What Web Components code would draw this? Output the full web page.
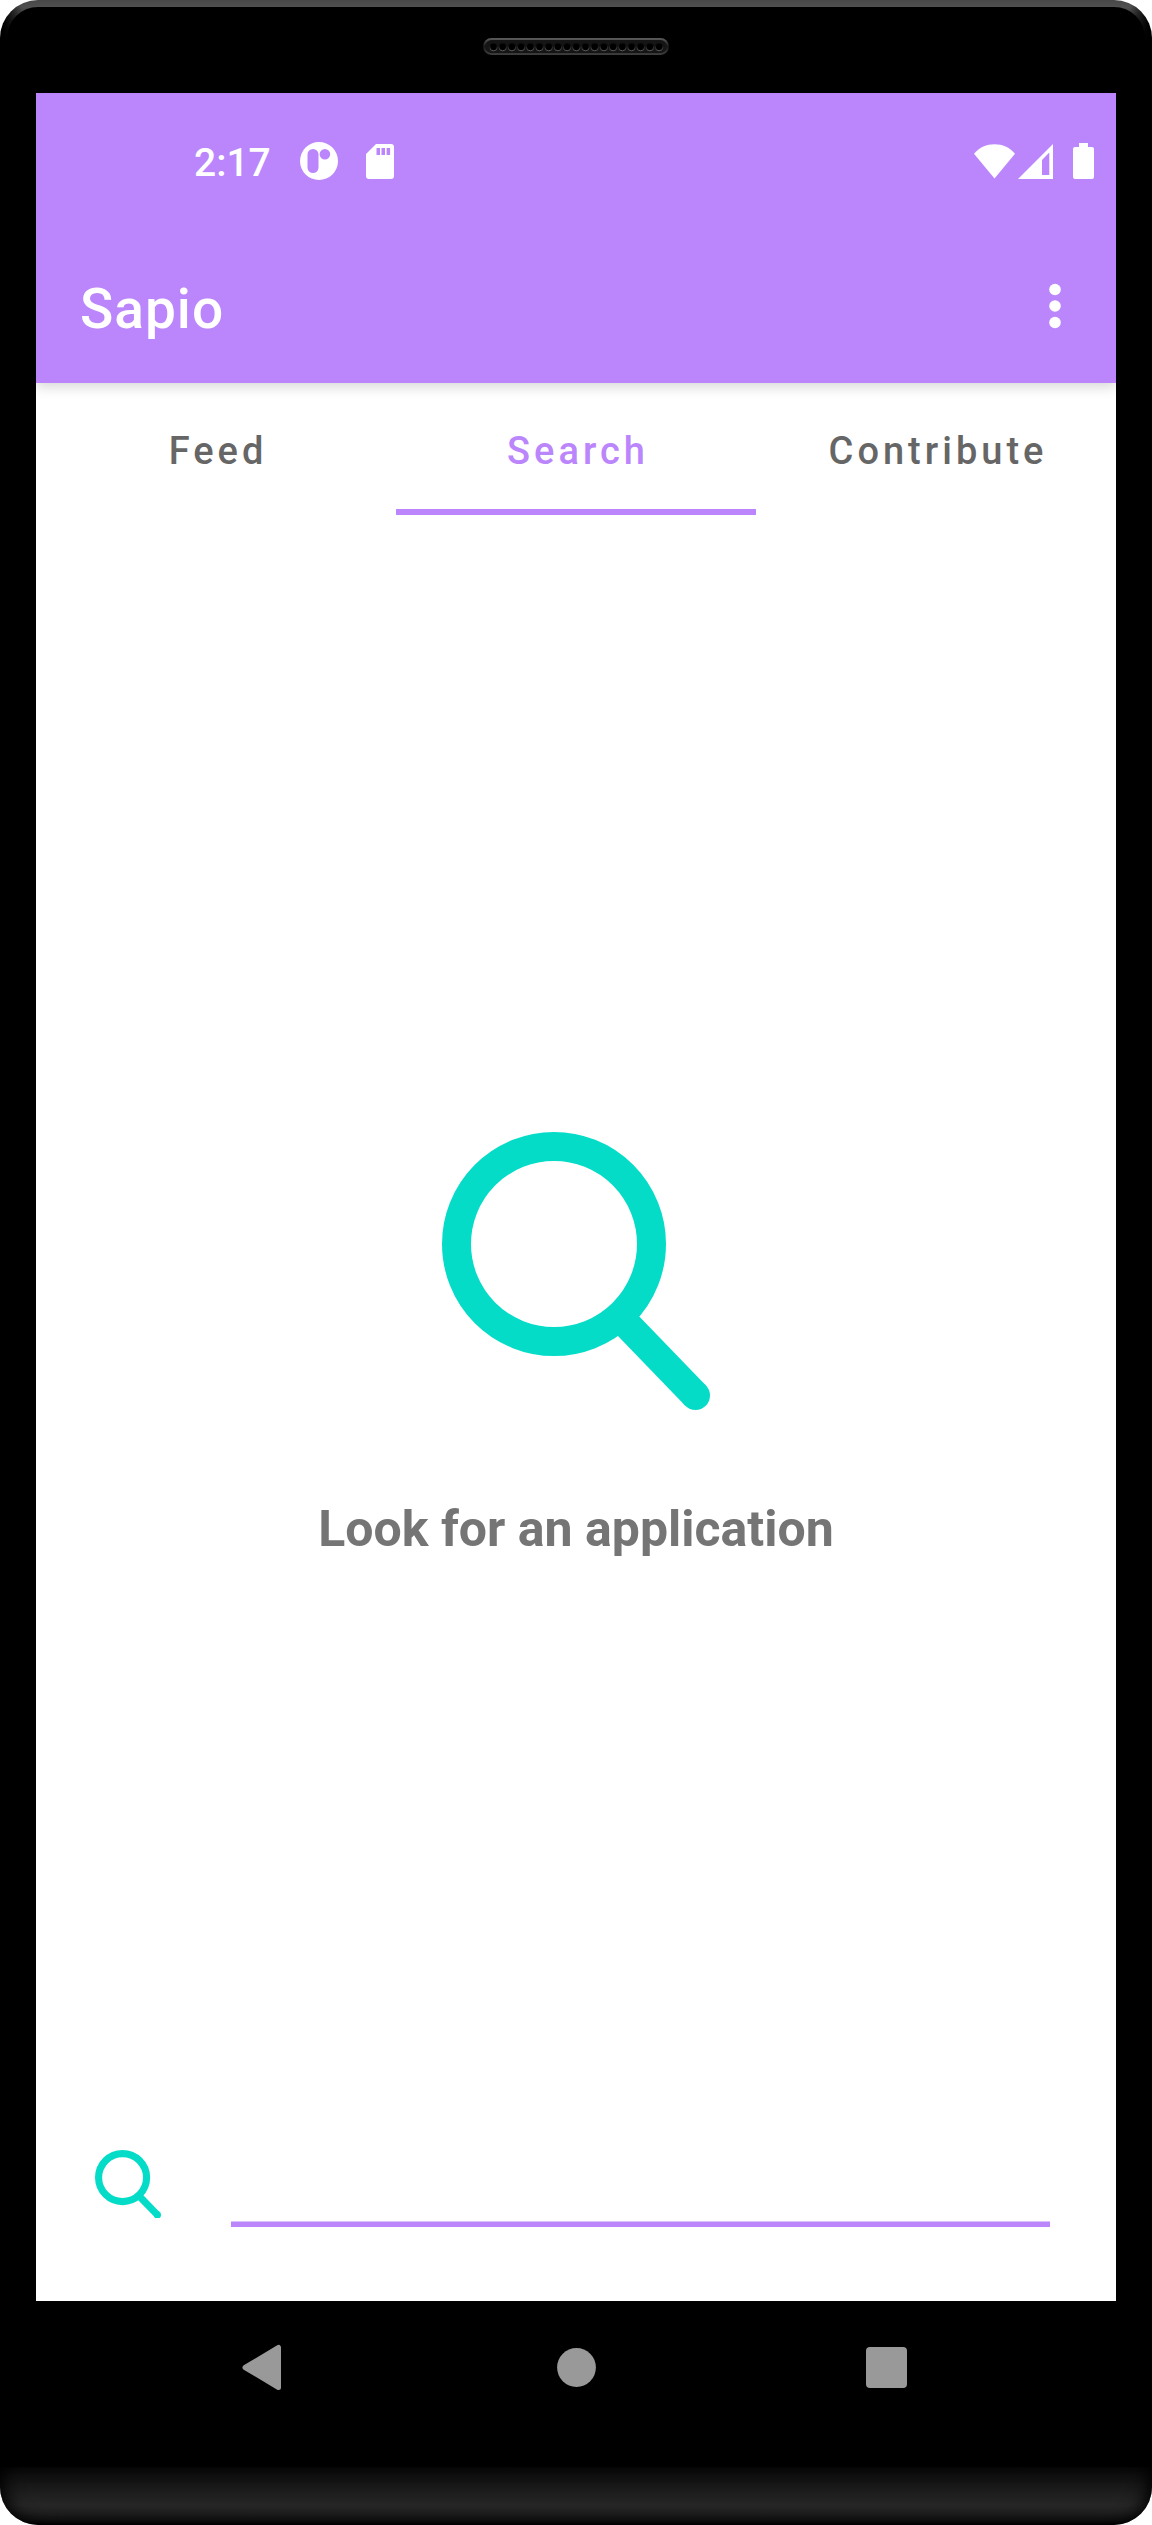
<!DOCTYPE html>
<html lang="en">
<head>
<meta charset="utf-8">
<meta name="viewport" content="width=device-width, initial-scale=1">
<title>Sapio</title>
<style>
  html, body { margin: 0; background: #fff; }
  body {
    font-family: Roboto, "Liberation Sans", sans-serif;
    --primary: #bb86fc;
    --accent: #05dcc8;
    --nav: #999;
  }
</style>
</head>
<body>
<phone-frame>
  <status-bar>2:17</status-bar>
  <app-bar>Sapio</app-bar>
  <tab-strip>
    <tab-item>Feed</tab-item>
    <tab-item selected>Search</tab-item>
    <tab-item>Contribute</tab-item>
  </tab-strip>
  <empty-state>Look for an application</empty-state>
  <search-field></search-field>
  <nav-bar slot="nav"></nav-bar>
</phone-frame>

<script>
function define(name, html) {
  const template = document.createElement('template');
  template.innerHTML = html;
  customElements.define(name, class extends HTMLElement {
    constructor() {
      super();
      this.attachShadow({ mode: 'open' }).append(template.content.cloneNode(true));
    }
    connectedCallback() {
      // Tabs tell assistive technology which one is current.
      const tab = this.shadowRoot.querySelector('[role=tab]');
      if (tab) tab.setAttribute('aria-selected', String(this.hasAttribute('selected')));
    }
  });
}

const holes = Array.from({ length: 19 }, (_, i) =>
  `<circle cx="${(10.5 + i * 9.2).toFixed(1)}" cy="9" r="3.8" fill="#000" stroke="url(#rim)" stroke-width="1"/>`).join('');

define('speaker-grille', `
  <style>
    :host { display: block; }
    svg { display: block; }
  </style>
  <svg width="186" height="17" viewBox="0 0 186 17" aria-hidden="true">
    <defs>
      <linearGradient id="rim" x1="0" y1="0" x2="0" y2="1">
        <stop offset="0.3" stop-color="#0c0c0c"/><stop offset="1" stop-color="#606060"/>
      </linearGradient>
      <linearGradient id="edge" x1="0" y1="0" x2="0" y2="1">
        <stop offset="0" stop-color="#575757"/><stop offset="0.5" stop-color="#181818"/><stop offset="1" stop-color="#3c3c3c"/>
      </linearGradient>
    </defs>
    <rect x="1" y="1" width="184" height="15" rx="7.5" fill="#151515" stroke="url(#edge)" stroke-width="2"/>
    ${holes}
  </svg>`);

define('phone-frame', `
  <style>
    :host { display: flex; flex-direction: column; min-height: 100vh; }
    header {
      box-sizing: border-box; height: 93px; display: flex; justify-content: center; align-items: center;
      border: 7px solid transparent; border-radius: 38px 38px 0 0;
      background:
        linear-gradient(#000, #000) padding-box,
        linear-gradient(90deg, #000 3px, transparent 22px, transparent calc(100% - 22px), #000 calc(100% - 3px)) border-box,
        linear-gradient(#474747, #505050 7px, #383838 16px, #000 42px) border-box;
    }
    .body { flex: 1; display: flex; flex-direction: column; background: #000; padding: 0 36px 34px; }
    main { flex: 1; display: flex; flex-direction: column; background: #fff; }
    ::slotted(empty-state) { flex: 1; }
    .top { background: linear-gradient(#fff 50%, #000 50%); }
    footer {
      height: 58px; border-radius: 0 0 38px 38px;
      background: linear-gradient(#0a0a0a, #161616 16px, #262626 38px, #222 44px, #111 54px, #000);
      box-shadow: inset 10px 0 18px -6px #000, inset -10px 0 18px -6px #000;
    }
  </style>
  <div class="top"><header><speaker-grille></speaker-grille></header></div>
  <div class="body"><main><slot></slot></main><slot name="nav"></slot></div>
  <footer></footer>`);

define('status-bar', `
  <style>
    :host {
      display: flex; align-items: center; height: 136px; box-sizing: border-box;
      padding: 0 22px 0 158px; background: var(--primary); color: #fff;
    }
    .time { font-size: 39px; line-height: 46px; font-weight: 500; padding-top: 3px; }
    svg { display: block; }
    .app { margin-left: 29px; }
    .card { margin-left: 28px; }
    .wifi { margin-left: auto; }
    .signal { margin-left: 3px; }
    .battery { margin-left: 20px; }
  </style>
  <span class="time"><slot></slot></span>
  <svg class="app" width="38" height="38" viewBox="0 0 38 38" fill="#fff" aria-hidden="true">
    <path fill-rule="evenodd" d="M19 0a19 19 0 1 1 0 38a19 19 0 1 1 0-38zM13 7a5.500 5.500 0 0 0-5.500 5.500v13a5.500 5.500 0 0 0 11 0v-13A5.500 5.500 0 0 0 13 7zM24.900 7a5.300 5.300 0 1 0 0 10.600a5.300 5.300 0 1 0 0-10.600z"/>
  </svg>
  <svg class="card" width="28" height="35" viewBox="0 0 28 35" fill="#fff" aria-hidden="true">
    <path fill-rule="evenodd" d="M10 0h15a3 3 0 0 1 3 3v29a3 3 0 0 1-3 3H3a3 3 0 0 1-3-3V10zM10.500 4v7h3.500V4zM15.500 4v7h3.500V4zM20.600 4v7h3.500V4z"/>
  </svg>
  <svg class="wifi" width="41" height="35" viewBox="0 0 41 35" fill="#fff" aria-hidden="true">
    <path d="M20.500 34.500L0 9.700C5.600 3.200 12.600.3 20.500.3S35.400 3.200 41 9.700z"/>
  </svg>
  <svg class="signal" width="35" height="35" viewBox="0 0 35 35" fill="#fff" aria-hidden="true">
    <path fill-rule="evenodd" d="M35 0v35H0zM31.300 8.500L24 16v15h7.300z"/>
  </svg>
  <svg class="battery" width="21" height="36" viewBox="0 0 21 36" fill="#fff" aria-hidden="true">
    <path d="M6 0h9v4h4a2 2 0 0 1 2 2v28a2 2 0 0 1-2 2H2a2 2 0 0 1-2-2V6a2 2 0 0 1 2-2h4z"/>
  </svg>`);

define('app-bar', `
  <style>
    :host {
      display: flex; align-items: center; justify-content: space-between; height: 154px;
      box-sizing: border-box; padding: 0 6px 0 44px; background: var(--primary); color: #fff;
      position: relative; z-index: 1;
      box-shadow: 0 4px 12px rgba(0, 0, 0, .16);
      clip-path: inset(0 0 -24px 0);
    }
    h1 { margin: 0; font-size: 55px; line-height: 64px; font-weight: 500; letter-spacing: 1px; padding-top: 6px; }
    button { border: 0; padding: 0; background: none; width: 110px; height: 110px; display: grid; place-items: center; color: inherit; }
  </style>
  <h1><slot></slot></h1>
  <button type="button" aria-label="More options">
    <svg width="12" height="46" viewBox="0 0 12 46" fill="currentColor" aria-hidden="true">
      <circle cx="6" cy="6.500" r="5.800"/><circle cx="6" cy="23" r="5.800"/><circle cx="6" cy="39.500" r="5.800"/>
    </svg>
  </button>`);

define('tab-strip', `
  <style>
    :host { display: block; }
    div { display: grid; grid-template-columns: repeat(3, 1fr); height: 132px; }
  </style>
  <div role="tablist"><slot></slot></div>`);

define('tab-item', `
  <style>
    :host { display: flex; }
    button {
      flex: 1; border: solid transparent; border-width: 6px 0; padding: 4px 0 0 4px; background: none;
      font: 500 38px/46px Roboto, "Liberation Sans", sans-serif; letter-spacing: 4px; color: #666;
    }
    :host([selected]) button { color: var(--primary); border-bottom-color: var(--primary); }
  </style>
  <button type="button" role="tab"><slot></slot></button>`);

define('search-glyph', `
  <style>
    :host { display: block; }
    svg { display: block; width: 100%; height: auto; }
  </style>
  <svg viewBox="0 0 268 278" fill="none" stroke="var(--accent)" stroke-width="29" aria-hidden="true">
    <circle cx="112" cy="112" r="97.500"/>
    <path d="M253.500 263.500L184 191.500"/>
    <circle cx="253.500" cy="263.500" r="14.500" fill="var(--accent)" stroke="none"/>
  </svg>`);

define('empty-state', `
  <style>
    :host { display: flex; flex-direction: column; align-items: center; justify-content: center; gap: 90px; padding-top: 24px; }
    search-glyph { width: 268px; }
    p { margin: 0; font-size: 50px; line-height: 58px; font-weight: 700; color: #757575; text-align: center; }
  </style>
  <search-glyph></search-glyph>
  <p><slot></slot></p>`);

define('search-field', `
  <style>
    :host { display: block; }
    form { display: flex; align-items: flex-start; gap: 70px; padding: 0 66px 74px 59px; }
    label { width: 66px; }
    input {
      flex: 1; min-width: 0; box-sizing: border-box; height: 77px; margin: 0; padding: 0 0 6px;
      border: 0; border-bottom: 5px solid var(--primary); border-radius: 0; outline: 0; background: none;
      box-shadow: inset 0 -1px 0 #dcc2fd; font: 50px/58px Roboto, "Liberation Sans", sans-serif; color: #333;
    }
  </style>
  <form role="search">
    <label for="query" aria-label="Search"><search-glyph></search-glyph></label>
    <input id="query" type="text" autocomplete="off">
  </form>`);

define('nav-bar', `
  <style>
    :host { display: block; }
    nav { display: flex; align-items: center; justify-content: center; gap: 180px; height: 132px; }
    button { border: 0; padding: 0; background: none; width: 132px; height: 132px; }
    svg { display: block; fill: var(--nav); }
    path { stroke: var(--nav); stroke-width: 5px; stroke-linejoin: round; }
  </style>
  <nav aria-label="System">
    <button type="button" aria-label="Back">
      <svg width="132" height="132" viewBox="0 0 132 132"><path d="M47 66.500L80.500 46.500V86.500z"/></svg>
    </button>
    <button type="button" aria-label="Home">
      <svg width="132" height="132" viewBox="0 0 132 132"><circle cx="66.500" cy="66.500" r="19.400"/></svg>
    </button>
    <button type="button" aria-label="Overview">
      <svg width="132" height="132" viewBox="0 0 132 132"><rect x="44" y="46" width="41" height="41" rx="4"/></svg>
    </button>
  </nav>`);
</script>
</body>
</html>
